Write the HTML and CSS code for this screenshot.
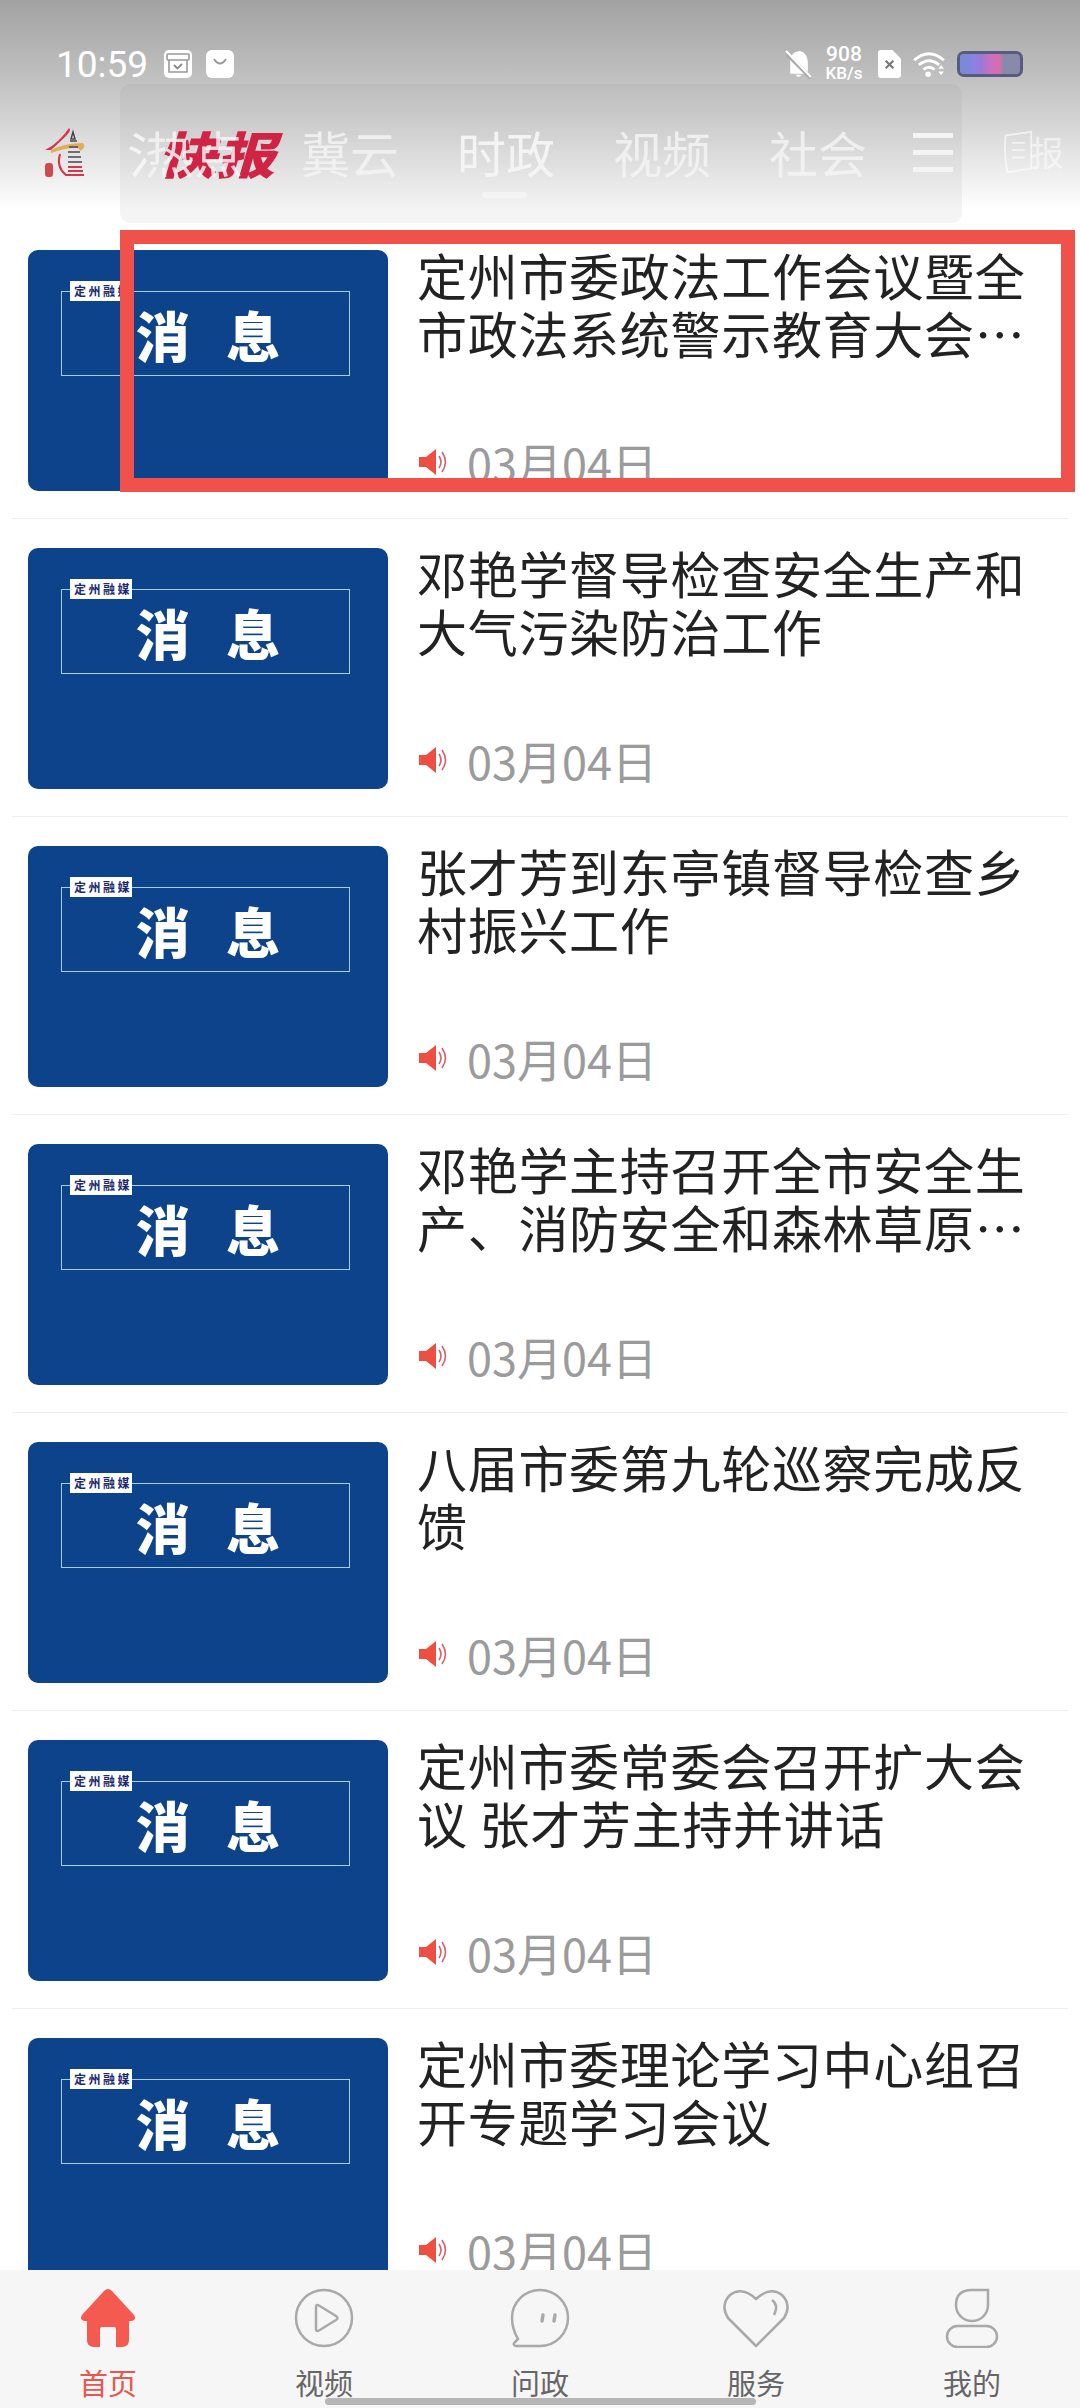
FILE: index.html
```html
<!DOCTYPE html>
<html lang="zh-CN">
<head>
  <meta charset="UTF-8">
  <title>定州融媒</title>
  <link rel="stylesheet" href="styles.css">
</head>
<body>
  <div class="page">
    <header class="top">
      <div class="status">
        <div class="status-left">
          <span class="clock">10:59</span>
          <svg class="note" viewBox="0 0 28 28"><rect width="28" height="28" rx="5" fill="#fff"/><rect x="3" y="4" width="22" height="6" rx="1" fill="none" stroke="#999" stroke-width="1.6"/><path d="M5 10v12h18V10" fill="none" stroke="#999" stroke-width="1.6"/><path d="M10 15l3.500 3.500L18 14" fill="none" stroke="#888" stroke-width="1.800"/></svg>
          <svg class="note" viewBox="0 0 28 28"><rect width="28" height="28" rx="6" fill="#fff"/><path d="M8 9q6 9 12 0" fill="none" stroke="#999" stroke-width="2"/></svg>
        </div>
        <div class="status-right">
          <svg class="bell" viewBox="0 0 26 28"><path d="M5 23V11q0-9 9-10q7 1 8 10v12z" fill="#fff"/><path d="M10 24q3 4 6 0z" fill="#fff"/><path d="M2 4l23 23" stroke="#aaa" stroke-width="4"/><path d="M1 1l24 25" stroke="#fff" stroke-width="2"/></svg>
          <div class="speed"><b>908</b><span>KB/s</span></div>
          <svg class="sim" viewBox="0 0 24 29"><path d="M3 0h12l9 9v17q0 3-3 3H3q-3 0-3-3V3q0-3 3-3z" fill="#fff"/><path d="M8 11l8 8M16 11l-8 8" stroke="#777" stroke-width="2.200"/></svg>
          <svg class="wifi" viewBox="0 0 36 28"><path d="M2 10q16-14 32 0M7 15q11-9 22 0M12 20q6-5 12 0" fill="none" stroke="#fff" stroke-width="3"/><circle cx="17" cy="25" r="3" fill="#fff"/><path d="M31 15l3 4h-6zM31 26l3-4h-6z" fill="#fff"/></svg>
          <div class="battery"><div class="battery-fill"></div></div>
        </div>
      </div>
      <nav class="nav">
        <svg class="logo" viewBox="0 0 44 52">
          <path d="M2 24q8-4 14-10t10-12q3 2-3 8T8 24" fill="#d8344a"/>
          <path d="M8 24q14-7 32-7q4 4-3 8q0-4-9-3T8 27z" fill="#dfae55"/>
          <path d="M30 6l2 7h-4zM27 15h7M26 21h9M25 26h12M25 31h13M25 36h14" stroke="#4a4450" stroke-width="1.500" fill="none"/>
          <path d="M17 28q-4 13 6 21h18M25 41h14M25 45h15" stroke="#d8344a" stroke-width="2" fill="none"/>
          <rect x="2" y="37" width="8" height="14" rx="3" fill="#cf4a50"/>
        </svg>
        <span class="brand">快报</span>
        <div class="tabs">
          <span class="tab tab-cut">氵</span>
          <span class="tab">热点</span>
          <span class="tab">冀云</span>
          <span class="tab tab-on">时政</span>
          <span class="tab">视频</span>
          <span class="tab">社会</span>
          <span class="tab-menu"><i></i><i></i><i></i></span>
          <span class="paper">
            <svg class="paper-icon" viewBox="0 0 36 48"><path d="M5 6l28-4v40L7 46q-4-18-2-40zM12 14h14M12 22h14M12 30h14" fill="none" stroke="#fff" stroke-opacity="0.6" stroke-width="2"/></svg>
            <span>报</span>
          </span>
        </div>
      </nav>
    </header>

    <main class="list">
      <article class="item">
        <div class="thumb"><div class="thumb-box"><span class="thumb-tag">定州融媒</span><span class="thumb-word">消 息</span></div></div>
        <div class="item-body">
          <h2 class="item-title">定州市委政法工作会议暨全市政法系统警示教育大会…</h2>
          <div class="item-meta"><svg class="horn" viewBox="0 0 30 30"><path d="M1 10h7l10-8v26l-10-8H1z" fill="#ee4f43"/><path d="M21 9q4 6 0 12M24 5q7 10 0 20" fill="none" stroke="#d9606a" stroke-width="1.600"/></svg><span>03月04日</span></div>
        </div>
      </article>
      <article class="item">
        <div class="thumb"><div class="thumb-box"><span class="thumb-tag">定州融媒</span><span class="thumb-word">消 息</span></div></div>
        <div class="item-body">
          <h2 class="item-title">邓艳学督导检查安全生产和大气污染防治工作</h2>
          <div class="item-meta"><svg class="horn" viewBox="0 0 30 30"><path d="M1 10h7l10-8v26l-10-8H1z" fill="#ee4f43"/><path d="M21 9q4 6 0 12M24 5q7 10 0 20" fill="none" stroke="#d9606a" stroke-width="1.600"/></svg><span>03月04日</span></div>
        </div>
      </article>
      <article class="item">
        <div class="thumb"><div class="thumb-box"><span class="thumb-tag">定州融媒</span><span class="thumb-word">消 息</span></div></div>
        <div class="item-body">
          <h2 class="item-title">张才芳到东亭镇督导检查乡村振兴工作</h2>
          <div class="item-meta"><svg class="horn" viewBox="0 0 30 30"><path d="M1 10h7l10-8v26l-10-8H1z" fill="#ee4f43"/><path d="M21 9q4 6 0 12M24 5q7 10 0 20" fill="none" stroke="#d9606a" stroke-width="1.600"/></svg><span>03月04日</span></div>
        </div>
      </article>
      <article class="item">
        <div class="thumb"><div class="thumb-box"><span class="thumb-tag">定州融媒</span><span class="thumb-word">消 息</span></div></div>
        <div class="item-body">
          <h2 class="item-title">邓艳学主持召开全市安全生产、消防安全和森林草原…</h2>
          <div class="item-meta"><svg class="horn" viewBox="0 0 30 30"><path d="M1 10h7l10-8v26l-10-8H1z" fill="#ee4f43"/><path d="M21 9q4 6 0 12M24 5q7 10 0 20" fill="none" stroke="#d9606a" stroke-width="1.600"/></svg><span>03月04日</span></div>
        </div>
      </article>
      <article class="item">
        <div class="thumb"><div class="thumb-box"><span class="thumb-tag">定州融媒</span><span class="thumb-word">消 息</span></div></div>
        <div class="item-body">
          <h2 class="item-title">八届市委第九轮巡察完成反馈</h2>
          <div class="item-meta"><svg class="horn" viewBox="0 0 30 30"><path d="M1 10h7l10-8v26l-10-8H1z" fill="#ee4f43"/><path d="M21 9q4 6 0 12M24 5q7 10 0 20" fill="none" stroke="#d9606a" stroke-width="1.600"/></svg><span>03月04日</span></div>
        </div>
      </article>
      <article class="item">
        <div class="thumb"><div class="thumb-box"><span class="thumb-tag">定州融媒</span><span class="thumb-word">消 息</span></div></div>
        <div class="item-body">
          <h2 class="item-title">定州市委常委会召开扩大会议 张才芳主持并讲话</h2>
          <div class="item-meta"><svg class="horn" viewBox="0 0 30 30"><path d="M1 10h7l10-8v26l-10-8H1z" fill="#ee4f43"/><path d="M21 9q4 6 0 12M24 5q7 10 0 20" fill="none" stroke="#d9606a" stroke-width="1.600"/></svg><span>03月04日</span></div>
        </div>
      </article>
      <article class="item">
        <div class="thumb"><div class="thumb-box"><span class="thumb-tag">定州融媒</span><span class="thumb-word">消 息</span></div></div>
        <div class="item-body">
          <h2 class="item-title">定州市委理论学习中心组召开专题学习会议</h2>
          <div class="item-meta"><svg class="horn" viewBox="0 0 30 30"><path d="M1 10h7l10-8v26l-10-8H1z" fill="#ee4f43"/><path d="M21 9q4 6 0 12M24 5q7 10 0 20" fill="none" stroke="#d9606a" stroke-width="1.600"/></svg><span>03月04日</span></div>
        </div>
      </article>
    </main>

    <footer class="tabbar">
      <div class="bar-item bar-on">
        <svg class="bar-icon" viewBox="0 0 60 60"><path d="M30 1q2 0 4 2l22 24q3 4-2 6h-3v19q0 7-7 7h-6V41q0-2-2-2h-12q-2 0-2 2v18h-6q-7 0-7-7V33H6q-5-2-2-6L26 3q2-2 4-2z" fill="#f55a50"/></svg>
        <span>首页</span>
      </div>
      <div class="bar-item">
        <svg class="bar-icon" viewBox="0 0 60 60"><circle cx="30" cy="30" r="28" fill="none" stroke="#a9a9a9" stroke-width="2.500"/><path d="M22 19q0-3 3-1.500l17 10.500q3 2 0 4l-17 10.500q-3 1.500-3-1.500z" fill="none" stroke="#a9a9a9" stroke-width="2.500"/></svg>
        <span>视频</span>
      </div>
      <div class="bar-item">
        <svg class="bar-icon" viewBox="0 0 60 60"><path d="M30 2a28 28 0 1 1 0 56H6q-4-1-1-4l3-3Q2 41 2 30A28 28 0 0 1 30 2z" fill="none" stroke="#a9a9a9" stroke-width="2.500"/><path d="M33 27l-1 6M45 27l-1 6" stroke="#a9a9a9" stroke-width="3.500" stroke-linecap="round"/></svg>
        <span>问政</span>
      </div>
      <div class="bar-item">
        <svg class="bar-icon bar-icon-wide" viewBox="0 0 68 60"><path d="M34 58L6 30Q-2 17 8 7q12-9 26 4q14-13 26-4q10 10 2 23z" fill="none" stroke="#a9a9a9" stroke-width="2.500" stroke-linejoin="round"/><path d="M50 12q7 5 2 15" fill="none" stroke="#a9a9a9" stroke-width="2.500"/></svg>
        <span>服务</span>
      </div>
      <div class="bar-item">
        <svg class="bar-icon" viewBox="0 0 60 60"><path d="M46 2v15a16 16 0 1 1-32 0Q14 2 30 2z" fill="none" stroke="#a9a9a9" stroke-width="2.500"/><rect x="5" y="38" width="50" height="21" rx="10.500" fill="none" stroke="#a9a9a9" stroke-width="2.500"/></svg>
        <span>我的</span>
      </div>
      <div class="home-bar"></div>
    </footer>

    <div class="ghost"></div>
    <div class="mark"></div>
  </div>
</body>
</html>
```

FILE: styles.css
```css
* {
  box-sizing: border-box;
}

body {
  margin: 0;
  background: #fff;
  font-family: "Noto Sans CJK SC", "Noto Sans", sans-serif;
}

.page {
  position: relative;
  display: flex;
  flex-direction: column;
  width: 1080px;
  height: 2408px;
  overflow: hidden;
}

/* header */
.top {
  height: 221px;
  flex-shrink: 0;
  padding: 46px 0 0 56px;
  background: linear-gradient(180deg, #a2a2a2 0, #bdbdbd 70px, #d6d6d6 125px, #f8f8f8 195px, #fff 210px);
  color: #fff;
}

.status {
  display: flex;
  justify-content: space-between;
  align-items: center;
  height: 36px;
}

.status-left {
  display: flex;
  align-items: center;
  gap: 14px;
}

.clock {
  margin-right: 2px;
  font-family: Roboto, sans-serif;
  font-size: 37px;
}

.note {
  width: 28px;
  height: 28px;
}

.status-right {
  display: flex;
  align-items: center;
  margin-right: 57px;
}

.bell {
  width: 27px;
  height: 29px;
  margin-right: 13px;
}

.speed {
  display: flex;
  flex-direction: column;
  align-items: center;
  width: 38px;
  margin-right: 15px;
  font-family: Roboto, sans-serif;
  line-height: 19px;
}

.speed b {
  font-size: 21px;
  font-weight: 500;
}

.speed span {
  font-size: 17px;
  font-weight: 500;
}

.sim {
  width: 23px;
  height: 28px;
  margin-right: 11px;
}

.wifi {
  width: 34px;
  height: 26px;
  margin-right: 11px;
}

.battery {
  width: 66px;
  height: 26px;
  border: 3px solid #575b7c;
  border-radius: 7px;
  background: #878aa8;
  overflow: hidden;
}

.battery-fill {
  width: 72%;
  height: 100%;
  background: linear-gradient(90deg, #7d88d8 0, #7d88d8 22%, #8e80ea 34%, #9a7ad0 50%, #c56fc8 66%, #d86fa8 90%, #9b82b0 100%);
}

.nav {
  position: relative;
  display: flex;
  align-items: center;
  height: 70px;
  margin: 35px 0 0 -13px;
}

.logo {
  width: 44px;
  height: 52px;
  flex-shrink: 0;
}

.tabs {
  position: relative;
  display: flex;
  align-items: center;
  width: 950px;
  margin-left: 40px;
  font-size: 49px;
  line-height: 70px;
  color: rgba(255, 255, 255, 0.85);
  white-space: nowrap;
}

.tab {
  position: relative;
  flex-shrink: 0;
  margin-right: 58px;
}

.tab-cut {
  width: 18px;
  margin-right: 0;
  color: #fff;
}

.tab-on {
  color: #fff;
}

.tab-on::after {
  content: "";
  position: absolute;
  left: 25px;
  bottom: -11px;
  width: 45px;
  height: 6px;
  background: #fff;
  border-radius: 3px;
}

.tab-menu {
  display: flex;
  flex-direction: column;
  gap: 12px;
  flex-shrink: 0;
  width: 40px;
  margin-left: -12px;
}

.tab-menu i {
  height: 5px;
  background: #fff;
}

.paper {
  display: flex;
  align-items: center;
  flex-shrink: 0;
  margin-left: 48px;
  font-size: 34px;
  color: rgba(255, 255, 255, 0.55);
}

.paper-icon {
  width: 33px;
  height: 46px;
  margin-right: -4px;
}

.brand {
  position: absolute;
  left: 115px;
  top: 7px;
  font-size: 50px;
  font-weight: 900;
  font-style: italic;
  line-height: 56px;
  color: #d81e42;
  transform: scaleX(1.17);
  transform-origin: left center;
}

/* list */
.list {
  flex: 1;
  min-height: 0;
  overflow: hidden;
  padding: 0 12px;
}

.item {
  display: flex;
  height: 298px;
  padding: 29px 16px 0;
  border-bottom: 1px solid #efefef;
}

.thumb {
  width: 360px;
  height: 241px;
  flex-shrink: 0;
  padding: 41px 38px 0 33px;
  background: #0d438a;
  border-radius: 10px;
}

.thumb-box {
  position: relative;
  height: 85px;
  padding-left: 5px;
  border: 1px solid #a9cde8;
  text-align: center;
}

.thumb-tag {
  position: absolute;
  left: 8px;
  top: -11px;
  padding: 0 0 0 4px;
  background: #fff;
  color: #1a2a70;
  font-size: 12px;
  font-weight: 700;
  line-height: 20px;
  letter-spacing: 2.5px;
  white-space: nowrap;
}

.thumb-word {
  font-size: 54px;
  font-weight: 900;
  line-height: 86px;
  color: #fff;
  white-space: pre;
  word-spacing: 24px;
}

.item-body {
  display: flex;
  flex-direction: column;
  justify-content: space-between;
  flex: 1;
  min-width: 0;
  height: 241px;
  margin-left: 29px;
}

.item-title {
  margin: -5px 0 0;
  font-size: 50px;
  font-weight: 400;
  line-height: 58px;
  letter-spacing: 0.7px;
  color: #222;
}

.item-meta {
  display: flex;
  align-items: center;
  height: 42px;
  margin-bottom: 8px;
  font-size: 45px;
  color: #9b9b9b;
}

.horn {
  width: 32px;
  height: 30px;
  margin-right: 18px;
}

/* bottom bar */
.tabbar {
  position: relative;
  display: flex;
  flex-shrink: 0;
  height: 138px;
  padding-top: 18px;
  background: #f6f6f6;
}

.bar-item {
  display: flex;
  flex-direction: column;
  align-items: center;
  flex: 1;
  font-size: 29px;
  line-height: 36px;
  color: #666;
}

.bar-on {
  color: #e8564e;
}

.bar-icon {
  width: 60px;
  height: 60px;
  margin-bottom: 16px;
}

.bar-icon-wide {
  width: 68px;
}

.home-bar {
  position: absolute;
  left: 325px;
  bottom: 3px;
  width: 431px;
  height: 7px;
  border-radius: 4px;
  background: #b6b6b6;
}

/* overlays */
.ghost {
  position: absolute;
  left: 120px;
  top: 84px;
  width: 842px;
  height: 139px;
  border-radius: 10px;
  background: rgba(120, 120, 120, 0.08);
}

.mark {
  position: absolute;
  left: 120px;
  top: 230px;
  width: 955px;
  height: 262px;
  border: 14px solid #f0524b;
}
```
